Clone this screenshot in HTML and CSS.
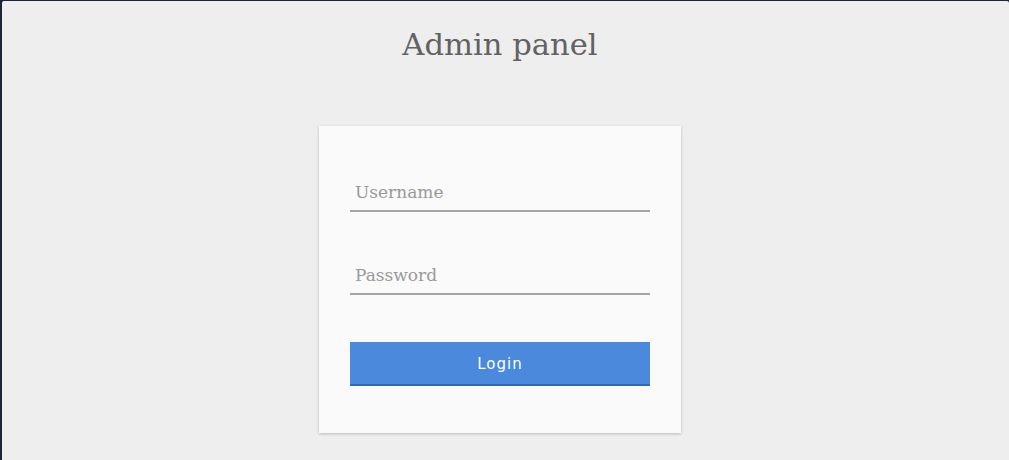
FILE: index.html
```html
<!DOCTYPE html>
<html>
<head>
<meta charset="utf-8">
<link rel="stylesheet" href="styles.css">
</head>
<body>
<div class="window">
  <div class="page">
    <h1 class="title">Admin panel</h1>
    <form class="card">
      <input class="field" type="text" placeholder="Username">
      <input class="field" type="password" placeholder="Password">
      <button class="btn" type="button">Login</button>
    </form>
  </div>
</div>
</body>
</html>
```
FILE: styles.css
```css
html, body {
  margin: 0;
  padding: 0;
  height: 100%;
  background: #1b2535;
  overflow: hidden;
}
.window {
  margin: 1px 0 0 2px;
  height: calc(100% - 1px);
  background: #eeeeee;
  border-top-left-radius: 2px;
  border-top-right-radius: 2px;
}
.page {
  width: 996px;
  display: flex;
  flex-direction: column;
  align-items: center;
}
.title {
  margin: 26px 0 0;
  font-family: "DejaVu Serif", serif;
  font-weight: normal;
  font-size: 30.6px;
  line-height: 36px;
  color: #626262;
}
.card {
  margin-top: 63px;
  width: 300px;
  padding: 48px 31px 47px;
  background: #fafafa;
  box-shadow: 0 1px 3px rgba(0,0,0,0.22);
  display: flex;
  flex-direction: column;
}
.field {
  box-sizing: border-box;
  height: 38px;
  width: 300px;
  border: none;
  border-bottom: 2px solid #a4a4a4;
  background: transparent;
  padding: 0 5px;
  font-family: "DejaVu Serif", serif;
  font-size: 17px;
  color: #555;
  outline: none;
}
.field::placeholder {
  color: #999999;
}
.field + .field {
  margin-top: 45px;
}
.btn {
  margin-top: 47px;
  height: 44px;
  width: 300px;
  border: none;
  border-bottom: 2px solid #3568b8;
  background: #4a89dc;
  color: #ffffff;
  font-family: "DejaVu Sans", sans-serif;
  font-size: 15px;
  letter-spacing: 1px;
  padding: 1px 0 0;
}
```
